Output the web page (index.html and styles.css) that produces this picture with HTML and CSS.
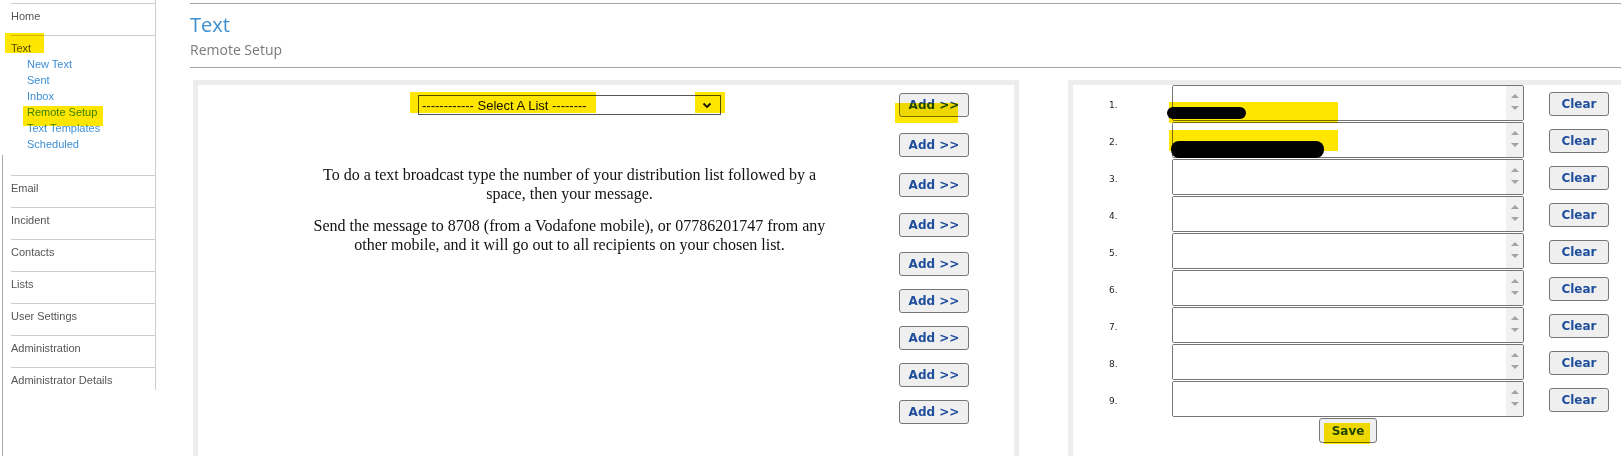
FILE: index.html
```html
<!DOCTYPE html>
<html lang="en">
<head>
    <meta charset="UTF-8">
    <meta name="viewport" content="width=device-width, initial-scale=1.0">
    <title>Text - Remote Setup</title>
    <link rel="stylesheet" href="styles.css">
</head>
<body>
    <div class="page">
        <div class="edge"></div>
        <nav class="side">
            <div class="nav-item"><a href="#">Home</a></div>
            <div class="nav-item open">
                <a href="#">Text</a>
                <ul class="sub">
                    <li><a href="#">New Text</a></li>
                    <li><a href="#">Sent</a></li>
                    <li><a href="#">Inbox</a></li>
                    <li><a href="#">Remote Setup</a></li>
                    <li><a href="#">Text Templates</a></li>
                    <li><a href="#">Scheduled</a></li>
                </ul>
            </div>
            <div class="nav-item"><a href="#">Email</a></div>
            <div class="nav-item"><a href="#">Incident</a></div>
            <div class="nav-item"><a href="#">Contacts</a></div>
            <div class="nav-item"><a href="#">Lists</a></div>
            <div class="nav-item"><a href="#">User Settings</a></div>
            <div class="nav-item"><a href="#">Administration</a></div>
            <div class="nav-item last"><a href="#">Administrator Details</a></div>
        </nav>

        <main class="main">
            <header class="head">
                <h1>Text</h1>
                <div class="crumb">Remote Setup</div>
            </header>

            <div class="panels">
                <section class="panel lists">
                    <div class="pick-col">
                        <div class="pick-row">
                            <span class="select-wrap">
                                <select>
                                    <option>------------ Select A List --------</option>
                                </select>
                                <svg class="chev" width="10" height="7" viewBox="0 0 10 7"><path d="M1.5 1.5 L5 5 L8.5 1.5" fill="none" stroke="#111" stroke-width="1.8"/></svg>
                            </span>
                        </div>
                        <div class="info">
                            <p>To do a text broadcast type the number of your distribution list followed by a space, then your message.</p>
                            <p>Send the message to 8708 (from a Vodafone mobile), or 07786201747 from any other mobile, and it will go out to all recipients on your chosen list.</p>
                        </div>
                    </div>
                    <div class="add-col">
                        <div class="add-row tall"><button class="btn add">Add &gt;&gt;</button></div>
                        <div class="add-row tall"><button class="btn add">Add &gt;&gt;</button></div>
                        <div class="add-row tall"><button class="btn add">Add &gt;&gt;</button></div>
                        <div class="add-row tall"><button class="btn add">Add &gt;&gt;</button></div>
                        <div class="add-row"><button class="btn add">Add &gt;&gt;</button></div>
                        <div class="add-row"><button class="btn add">Add &gt;&gt;</button></div>
                        <div class="add-row"><button class="btn add">Add &gt;&gt;</button></div>
                        <div class="add-row"><button class="btn add">Add &gt;&gt;</button></div>
                        <div class="add-row"><button class="btn add">Add &gt;&gt;</button></div>
                    </div>
                </section>

                <section class="panel setup">
                    <div class="slot"><span class="num">1.</span><div class="box"><textarea></textarea><div class="bar"><i class="up"></i><i class="down"></i></div></div><button class="btn clear">Clear</button></div>
                    <div class="slot"><span class="num">2.</span><div class="box"><textarea></textarea><div class="bar"><i class="up"></i><i class="down"></i></div></div><button class="btn clear">Clear</button></div>
                    <div class="slot"><span class="num">3.</span><div class="box"><textarea></textarea><div class="bar"><i class="up"></i><i class="down"></i></div></div><button class="btn clear">Clear</button></div>
                    <div class="slot"><span class="num">4.</span><div class="box"><textarea></textarea><div class="bar"><i class="up"></i><i class="down"></i></div></div><button class="btn clear">Clear</button></div>
                    <div class="slot"><span class="num">5.</span><div class="box"><textarea></textarea><div class="bar"><i class="up"></i><i class="down"></i></div></div><button class="btn clear">Clear</button></div>
                    <div class="slot"><span class="num">6.</span><div class="box"><textarea></textarea><div class="bar"><i class="up"></i><i class="down"></i></div></div><button class="btn clear">Clear</button></div>
                    <div class="slot"><span class="num">7.</span><div class="box"><textarea></textarea><div class="bar"><i class="up"></i><i class="down"></i></div></div><button class="btn clear">Clear</button></div>
                    <div class="slot"><span class="num">8.</span><div class="box"><textarea></textarea><div class="bar"><i class="up"></i><i class="down"></i></div></div><button class="btn clear">Clear</button></div>
                    <div class="slot"><span class="num">9.</span><div class="box"><textarea></textarea><div class="bar"><i class="up"></i><i class="down"></i></div></div><button class="btn clear">Clear</button></div>
                    <div class="save-row"><button class="btn save">Save</button></div>
                </section>
            </div>
        </main>
    </div>

    <!-- highlighter + redaction marks drawn over the page -->
    <div class="marks">
        <span class="hl" style="left:5px;top:33px;width:39px;height:20px"></span>
        <span class="hl" style="left:23px;top:106px;width:80px;height:20px"></span>
        <span class="hl" style="left:410px;top:92px;width:186px;height:21px"></span>
        <span class="hl" style="left:695px;top:92px;width:30px;height:21px"></span>
        <span class="hl" style="left:895px;top:103px;width:63px;height:20px"></span>
        <span class="hl" style="left:1169px;top:102px;width:169px;height:21px"></span>
        <span class="hl" style="left:1169px;top:130px;width:169px;height:21px"></span>
        <span class="hl" style="left:1324px;top:423px;width:46px;height:21px"></span>
        <span class="blot" style="left:1167px;top:107px;width:79px;height:12px"></span>
        <span class="blot" style="left:1171px;top:141px;width:153px;height:17px"></span>
    </div>
</body>
</html>
```

FILE: styles.css
```css
html, body {
    margin: 0;
    overflow: hidden;
}
body {
    font-family: "Liberation Sans", Arial, sans-serif;
    background: #fff;
}
.page {
    display: flex;
    align-items: flex-start;
    min-height: 456px;
}
.edge {
    width: 1px;
    margin-left: 2px;
    margin-top: 155px;
    height: 320px;
    background: #aaa;
}

/* sidebar */
.side {
    width: 144px;
    margin-left: 8px;
    padding-top: 3px;
    border-right: 1px solid #ccc;
    font-size: 11px;
}
.nav-item {
    border-top: 1px solid #ccc;
    padding: 5px 0 11px;
    line-height: 15px;
}
.nav-item a {
    color: #555;
    text-decoration: none;
}
.nav-item.open {
    padding-bottom: 23px;
}
.nav-item.last {
    padding-bottom: 2px;
}
.sub {
    list-style: none;
    margin: 0;
    padding: 0 0 0 16px;
}
.sub li {
    line-height: 16px;
}
.sub a {
    color: #3d8fd6;
}

/* main */
.main {
    flex: 1;
    margin-left: 34px;
    margin-top: 3px;
    min-width: 0;
}
.head {
    border-top: 1px solid #a6a6a6;
    border-bottom: 1px solid #a6a6a6;
    padding: 7px 0 8px;
}
.head h1 {
    margin: 0;
    font-family: "Open Sans", sans-serif;
    font-weight: normal;
    font-size: 20px;
    line-height: 27px;
    color: #3d8fd0;
}
.crumb {
    margin-top: 2px;
    font-family: "Open Sans", sans-serif;
    font-size: 14px;
    line-height: 19px;
    color: #7a7a7a;
}
.panels {
    display: flex;
    gap: 49px;
    margin-top: 12px;
    padding-left: 3px;
}
.panel {
    flex: none;
    width: 826px;
    box-sizing: border-box;
    border: 5px solid #ededed;
    min-height: 420px;
}

/* left panel */
.lists {
    display: flex;
    align-items: flex-start;
}
.pick-col {
    width: 701px;
    box-sizing: border-box;
    padding-left: 42px;
}
.pick-row {
    height: 40px;
    display: flex;
    align-items: center;
    justify-content: center;
}
.select-wrap {
    position: relative;
    display: inline-block;
}
.select-wrap select {
    appearance: none;
    -webkit-appearance: none;
    width: 303px;
    height: 20px;
    margin: 0;
    padding: 0 0 0 3px;
    border: 1px solid #555;
    border-radius: 0;
    background: #fff;
    font-family: "Liberation Sans", Arial, sans-serif;
    font-size: 13px;
    color: #111;
}
.chev {
    position: absolute;
    right: 9px;
    top: 7px;
}
.info {
    padding-top: 41px;
}
.info p {
    max-width: 530px;
    margin: 0 auto 14px;
    text-align: center;
    font-family: "Liberation Serif", "Times New Roman", serif;
    font-size: 16px;
    line-height: 18.6px;
    color: #111;
}
.add-col {
    width: 70px;
}
.add-row {
    height: 37px;
    display: flex;
    align-items: center;
}
.add-row.tall {
    height: 40px;
}

/* buttons */
.btn {
    height: 24px;
    padding: 0;
    background: #efefef;
    border: 1px solid #767676;
    border-radius: 3px;
    font-family: "DejaVu Sans", Verdana, sans-serif;
    font-weight: bold;
    font-size: 12px;
    color: #1f4e9c;
}
.add {
    width: 70px;
}
.clear {
    width: 60px;
    margin-left: 25px;
    margin-top: 7px;
}
.save {
    width: 58px;
    height: 25px;
}

/* right panel */
.slot {
    display: flex;
    align-items: flex-start;
    height: 37px;
}
.num {
    width: 99px;
    box-sizing: border-box;
    padding-left: 36px;
    margin-top: 14px;
    font-family: "DejaVu Sans", Verdana, sans-serif;
    font-size: 9px;
    line-height: 12px;
    color: #222;
}
.box {
    display: flex;
    width: 352px;
    height: 36px;
    box-sizing: border-box;
    border: 1px solid #767676;
    border-radius: 2px;
    overflow: hidden;
}
.box textarea {
    flex: 1;
    border: none;
    resize: none;
    outline: none;
    padding: 2px;
    font-family: "Liberation Sans", Arial, sans-serif;
    font-size: 13px;
}
.bar {
    width: 17px;
    background: #f1f1f1;
    display: flex;
    flex-direction: column;
    align-items: center;
    justify-content: space-between;
    padding: 8px 0 10px;
    box-sizing: border-box;
}
.bar i {
    width: 0;
    height: 0;
    border-left: 4px solid transparent;
    border-right: 4px solid transparent;
}
.bar .up {
    border-bottom: 4px solid #a3a3a3;
}
.bar .down {
    border-top: 4px solid #a3a3a3;
}
.save-row {
    width: 352px;
    margin-left: 99px;
    text-align: center;
    padding-bottom: 20px;
}

/* annotation marks */
.marks {
    position: absolute;
    left: 0;
    top: 0;
}
.hl {
    position: absolute;
    background: #ffe600;
    mix-blend-mode: multiply;
}
.blot {
    position: absolute;
    background: #000;
    border-radius: 8px;
}
```
